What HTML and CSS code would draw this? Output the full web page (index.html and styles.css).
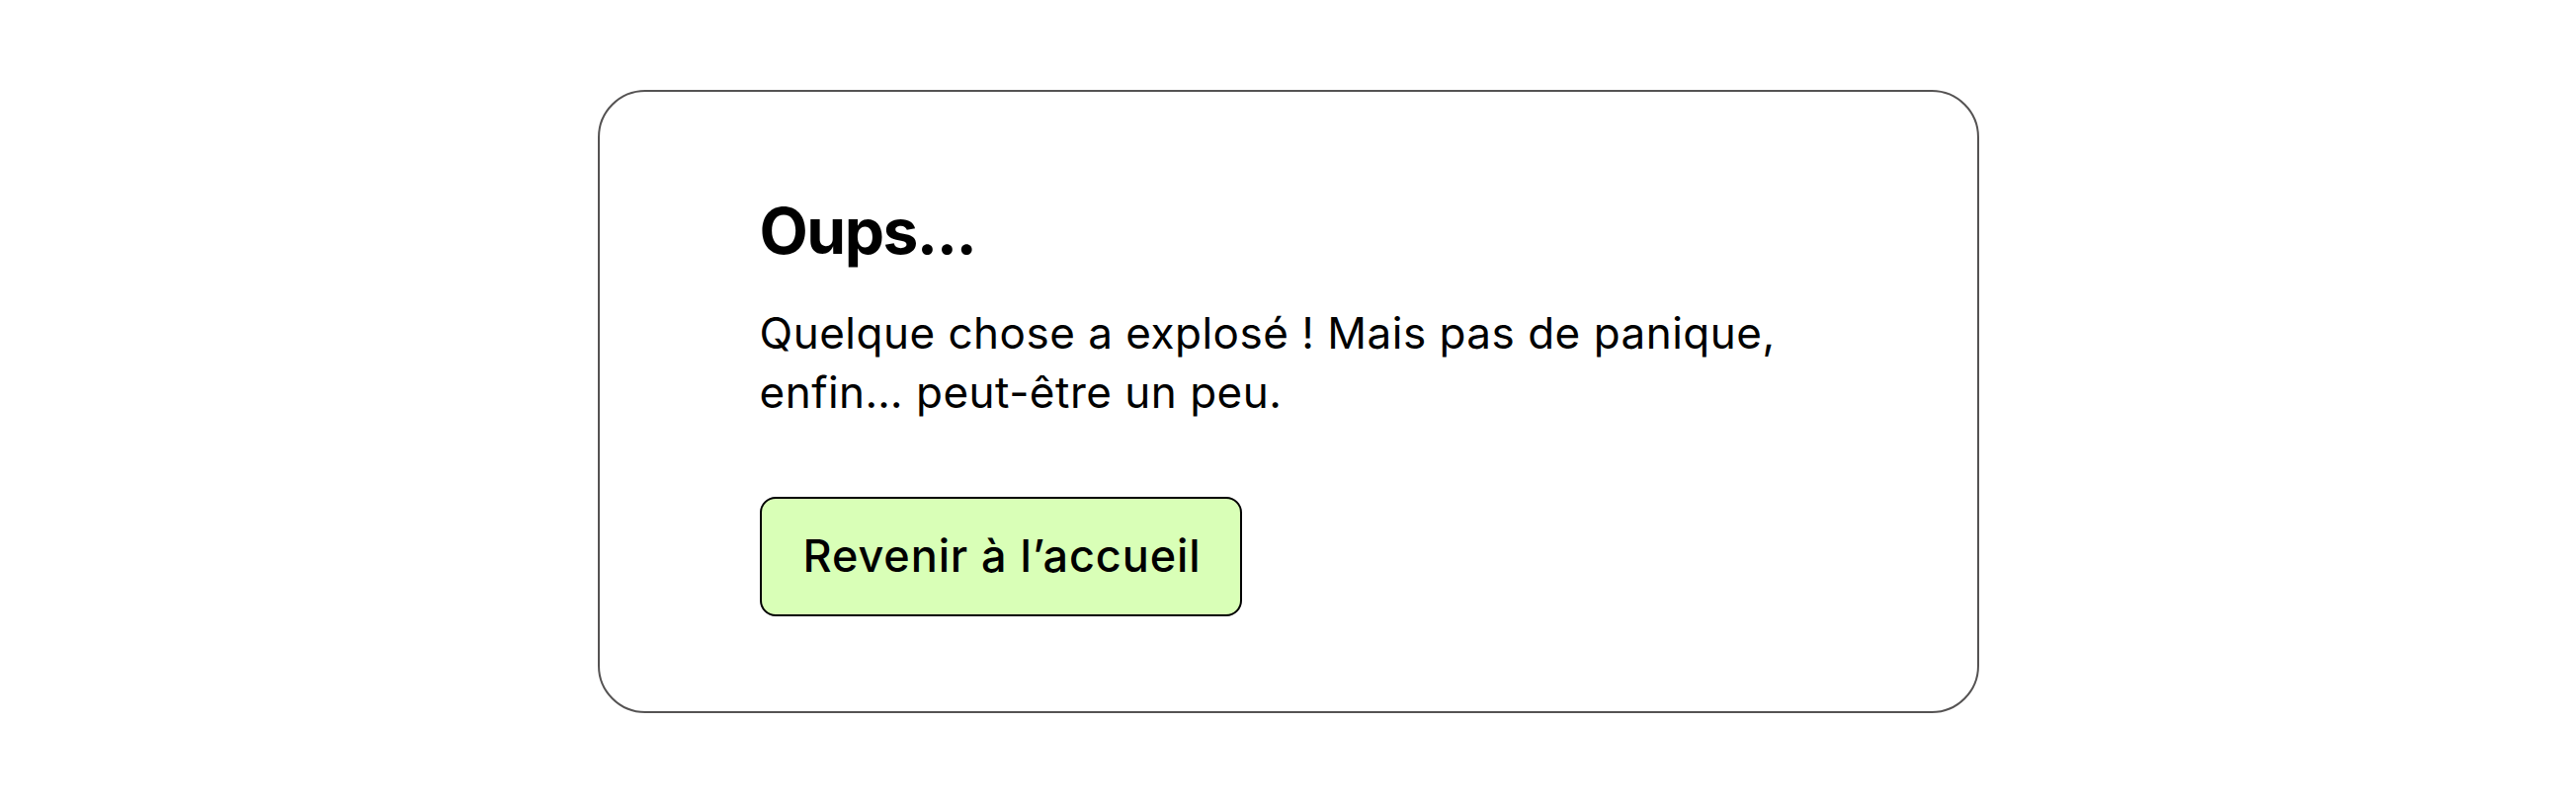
FILE: index.html
```html
<!DOCTYPE html>
<html lang="fr">
<head>
<meta charset="utf-8">
<title>Oups...</title>
<link rel="stylesheet" href="styles.css">
</head>
<body>
<main class="page">
  <section class="card">
    <h1 class="title">Oups...</h1>
    <p class="message">Quelque chose a explosé ! Mais pas de panique, enfin… peut-être un peu.</p>
    <a class="button" href="#">Revenir à l’accueil</a>
  </section>
</main>
</body>
</html>
```

FILE: styles.css
```css
* { box-sizing: border-box; }
html, body { margin: 0; padding: 0; background: #ffffff; }
body {
  font-family: Inter, "Noto Sans", "Liberation Sans", sans-serif;
  color: #000000;
}
.page {
  display: flex;
  justify-content: center;
  padding-top: 91px;
}
.card {
  width: 1398px;
  border: 2px solid #555353;
  border-radius: 48px;
  padding: 102px 160px 96px 162px;
  display: flex;
  flex-direction: column;
  align-items: flex-start;
}
.title {
  margin: 0;
  font-size: 64px;
  line-height: 77px;
  font-weight: 700;
  letter-spacing: -1.5px;
}
.message {
  margin: 35px 0 0 0;
  max-width: 1090px;
  font-size: 44px;
  line-height: 60px;
  font-weight: 400;
  letter-spacing: 0.5px;
}
.button {
  margin-top: 76px;
  display: inline-block;
  background: #d9ffb7;
  border: 2px solid #000000;
  border-radius: 16px;
  padding: 34px 40px 35px 42px;
  font-size: 45px;
  line-height: 48px;
  font-weight: 500;
  letter-spacing: 0.9px;
  color: #000000;
  text-decoration: none;
}
```
